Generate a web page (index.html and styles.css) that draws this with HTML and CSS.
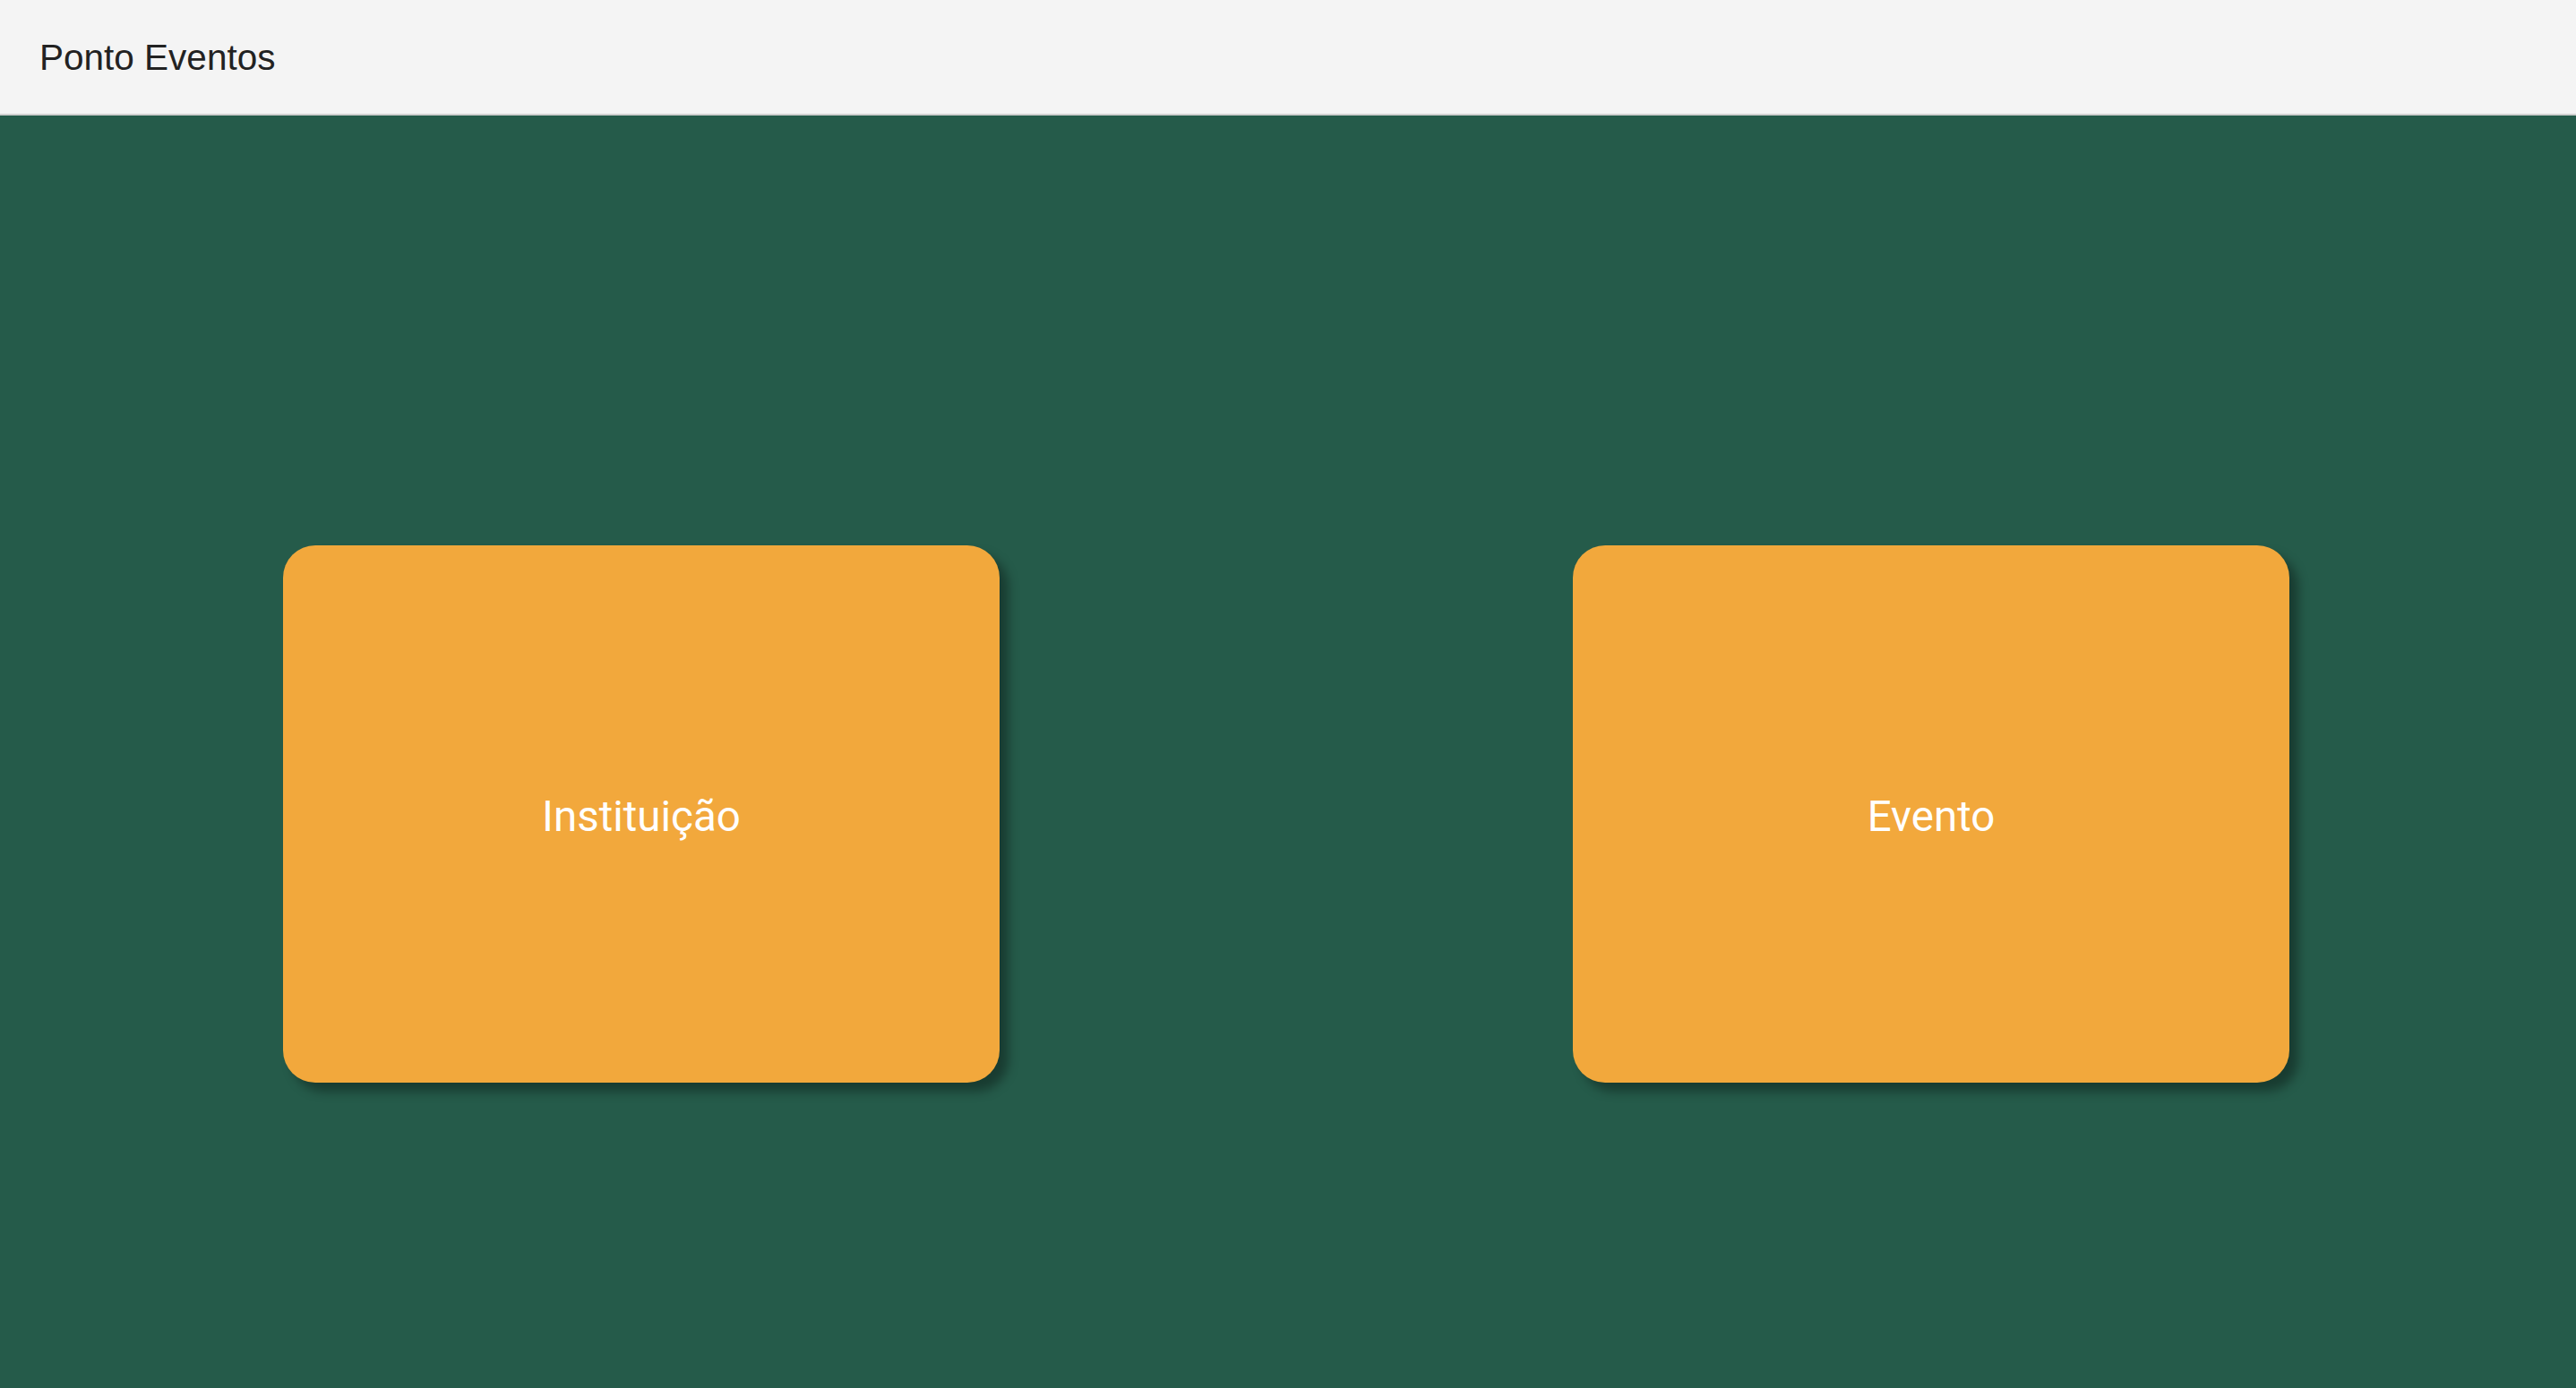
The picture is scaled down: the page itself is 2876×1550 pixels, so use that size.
FILE: index.html
```html
<!DOCTYPE html>
<html lang="pt">
<head>
<meta charset="utf-8">
<title>Ponto Eventos</title>
<link rel="stylesheet" href="styles.css">
</head>
<body>
<header class="topbar">
  <span class="brand">Ponto Eventos</span>
</header>
<main class="content">
  <div class="card">Instituição</div>
  <div class="card">Evento</div>
</main>
</body>
</html>
```
FILE: styles.css
```css
html, body {
  margin: 0;
  padding: 0;
  height: 100%;
}
body {
  background: #255b4a;
  font-family: "Liberation Sans", Arial, sans-serif;
  overflow: hidden;
}
.topbar {
  height: 127px;
  background: #f4f4f4;
  border-bottom: 2px solid #cfcfcf;
  display: flex;
  align-items: center;
  padding-left: 44px;
  box-sizing: content-box;
}
.brand {
  font-size: 40.5px;
  color: #222222;
  margin-top: 2px;
}
.content {
  display: flex;
  align-items: flex-start;
  gap: 640px;
  padding-top: 480px;
  padding-left: 316px;
}
.card {
  flex: none;
  width: 800px;
  height: 600px;
  background: #f2a83c;
  border-radius: 36px;
  box-shadow: 10px 10px 12px rgba(0, 0, 0, 0.35);
  display: flex;
  align-items: center;
  justify-content: center;
  color: #ffffff;
  font-family: Roboto, "Liberation Sans", sans-serif;
  font-size: 47.5px;
  padding-top: 5px;
  box-sizing: border-box;
}
```
